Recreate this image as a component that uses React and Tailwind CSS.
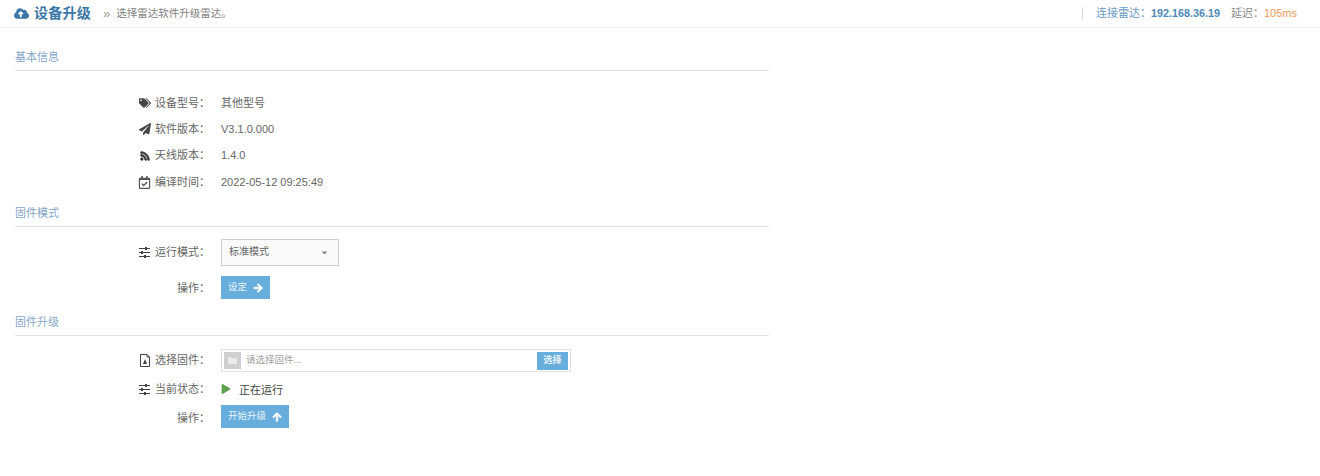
import React from "react";
import {
  FaCloudUploadAlt,
  FaTags,
  FaPaperPlane,
  FaRss,
  FaRegCalendarCheck,
  FaArrowRight,
  FaArrowUp,
  FaPlay,
  FaFolder,
  FaCaretDown,
} from "react-icons/fa";

const font = { fontFamily: '"Liberation Sans", "Noto Sans CJK SC", sans-serif' };

function SlidersIcon() {
  return (
    <svg width="11" height="11" viewBox="0 0 11 11" className="mr-[1px] text-[#444444]" fill="currentColor">
      <rect x="0" y="1" width="11" height="1" />
      <rect x="6" y="0" width="2" height="3" />
      <rect x="0" y="5" width="11" height="1" />
      <rect x="2" y="4" width="2" height="3" />
      <rect x="0" y="9" width="11" height="1" />
      <rect x="5" y="8" width="2" height="3" />
    </svg>
  );
}

function FileIcon() {
  return (
    <svg width="12" height="13" viewBox="0 0 12 13" className="text-[#444444]" fill="none" stroke="currentColor">
      <path d="M1.5 .5H8L10.5 3V12.5H1.5Z" />
      <path d="M8 .5V3H10.5" />
      <path d="M6 5L8 10H4Z" fill="currentColor" stroke="none" />
    </svg>
  );
}

function SectionTitle({ children, className }) {
  return (
    <div className={`h-[28px] border-b border-[#e2e2e2] text-[11px] leading-[28px] text-[#86a6c8] ${className}`}>
      {children}
    </div>
  );
}

function Row({ icon, label, children, className, labelClass }) {
  return (
    <div className={`flex items-center ${className}`}>
      <div className={`w-[195px] flex items-center justify-end gap-[4px] text-[11px] text-[#666666] ${labelClass}`}>
        {icon}
        <span>{label}：</span>
      </div>
      <div className="ml-[11px] flex items-center">{children}</div>
    </div>
  );
}

function BlueButton({ children }) {
  return (
    <button className="h-[23px] px-[7px] flex items-center gap-[6px] bg-[#68aedd] text-[9.5px] text-[#e8f3fa]">
      {children}
    </button>
  );
}

export default function App() {
  return (
    <div className="w-[1320px] h-[476px] bg-white overflow-hidden" style={font}>
      <header className="h-[28px] flex items-center justify-between border-b border-[#f0f0f0] pl-[14px] pr-[23px]">
        <div className="flex items-center">
          <FaCloudUploadAlt className="text-[15px] text-[#3a77a8]" />
          <h1 className="ml-[5px] text-[14px] font-bold tracking-[0.25px] text-[#3a77a8]">设备升级</h1>
          <span className="ml-[12px] text-[13px] leading-[13px] text-[#9a9a9a]">»</span>
          <span className="ml-[6px] text-[10.5px] text-[#808080]">选择雷达软件升级雷达。</span>
        </div>
        <div className="flex items-center text-[11px]">
          <div className="h-[13px] border-l border-[#dddddd] mr-[13px]"></div>
          <span className="text-[#6b9bc6]">连接雷达：</span>
          <span className="font-bold text-[#4f89b9] text-[10.8px]">192.168.36.19</span>
          <span className="ml-[11px] text-[#888888]">延迟：</span>
          <span className="text-[#f0995c]">105ms</span>
        </div>
      </header>

      <main className="w-[769px] pl-[15px]">
        <SectionTitle className="mt-[15px]">基本信息</SectionTitle>
        <div className="mt-[19px]">
          <Row className="h-[26px]" icon={<FaTags className="text-[12px] text-[#444444]" />} label="设备型号">
            <span className="text-[11px] text-[#666666]">其他型号</span>
          </Row>
          <Row className="h-[26px]" icon={<FaPaperPlane className="text-[12px] text-[#444444]" />} label="软件版本">
            <span className="text-[11px] text-[#666666]">V3.1.0.000</span>
          </Row>
          <Row className="h-[27px]" icon={<FaRss className="text-[10px] text-[#333333] mr-[1px] stroke-[40]" />} label="天线版本">
            <span className="text-[11px] text-[#666666]">1.4.0</span>
          </Row>
          <Row className="h-[26px]" icon={<FaRegCalendarCheck className="text-[13px] text-[#555555]" />} label="编译时间">
            <span className="text-[11px] text-[#666666]">2022-05-12 09:25:49</span>
          </Row>
        </div>

        <SectionTitle className="mt-[4px]">固件模式</SectionTitle>
        <div className="mt-[12px] flex flex-col gap-[10px]">
          <Row icon={<SlidersIcon />} label="运行模式">
            <div className="w-[118px] h-[27px] flex items-center justify-between pl-[7px] pr-[9px] border border-[#cfcfcf] bg-[#fafafa] text-[10px] text-[#666666]">
              <span className="-mt-[2px]">标准模式</span>
              <FaCaretDown className="text-[9px] text-[#888888]" />
            </div>
          </Row>
          <Row label="操作" labelClass="pt-[1px]">
            <BlueButton>
              <span>设定</span>
              <FaArrowRight className="text-[10px] text-white stroke-[30]" />
            </BlueButton>
          </Row>
        </div>

        <SectionTitle className="mt-[9px]">固件升级</SectionTitle>
        <div className="mt-[13px]">
          <Row className="h-[23px]" icon={<FileIcon />} label="选择固件">
            <div className="w-[350px] h-[23px] flex items-center pl-[2px] pr-[2px] border border-[#e3e3e3] bg-white">
              <div className="w-[17px] h-[17px] flex items-center justify-center bg-[#cfcfcf]">
                <FaFolder className="text-[9px] text-[#ececec]" />
              </div>
              <span className="ml-[5px] flex-1 text-[9.5px] text-[#a0a0a0]">请选择固件...</span>
              <button className="w-[31px] h-[18px] bg-[#68aedd] text-[9px] font-bold text-[#e8f3fa]">选择</button>
            </div>
          </Row>
          <Row className="mt-[5px] h-[24px]" icon={<SlidersIcon />} label="当前状态">
            <FaPlay className="text-[10px] text-[#5fa04e]" />
            <span className="ml-[8px] mt-[3px] text-[11px] text-[#444444]">正在运行</span>
          </Row>
          <Row className="mt-[4px]" label="操作" labelClass="pt-[3px]">
            <BlueButton>
              <span>开始升级</span>
              <FaArrowUp className="text-[10px] text-white stroke-[30]" />
            </BlueButton>
          </Row>
        </div>
      </main>
    </div>
  );
}
